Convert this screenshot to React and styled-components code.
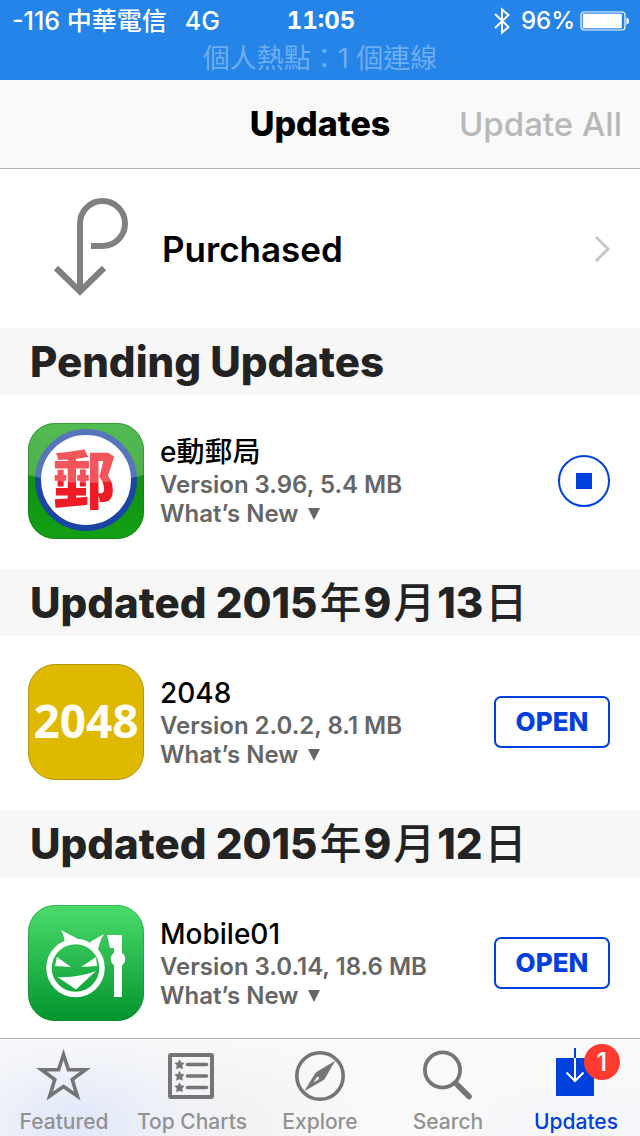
import React from "react";
import styled, { createGlobalStyle } from "styled-components";

const GlobalStyle = createGlobalStyle`
  * { box-sizing: border-box; }
  body {
    margin: 0;
    background: #fff;
    font-family: Inter, "Noto Sans CJK TC", sans-serif;
  }
  button { font-family: inherit; padding: 0; background: none; border: 0; cursor: pointer; }
  h1, h2, h3, p { margin: 0; }
`;

const Screen = styled.div`
  display: flex;
  flex-direction: column;
  height: 100vh;
  background: #fff;
`;

const StatusBar = styled.div`
  flex: none;
  height: 80px;
  background: #2484e8;
  color: #fff;
`;

const StatusRow = styled.div`
  display: grid;
  grid-template-columns: 1fr auto 1fr;
  align-items: center;
  height: 42px;
  padding: 0 10px 0 12px;
  font-size: 24px;
  line-height: 42px;
  font-weight: 500;
`;

const Carrier = styled.div`
  display: flex;
  gap: 18px;
  font-size: 25px;
`;

const Clock = styled.time`
  font-weight: 700;
  font-variant-numeric: tabular-nums;
`;

const StatusIcons = styled.div`
  display: flex;
  align-items: center;
  justify-content: flex-end;
`;

const BatteryLevel = styled.span`
  margin: 0 5px 0 11px;
`;

const Hotspot = styled.p`
  font-size: 27px;
  line-height: 34px;
  text-align: center;
  color: #6dadf0;
`;

const NavBar = styled.header`
  flex: none;
  display: grid;
  grid-template-columns: 1fr auto 1fr;
  align-items: center;
  height: 89px;
  padding: 0 18px;
  background: #f9f9f9;
  border-bottom: 1px solid #b2b2b2;
`;

const NavTitle = styled.h1`
  grid-column: 2;
  font-size: 34px;
  line-height: 44px;
  font-weight: 800;
  color: #000;
`;

const UpdateAll = styled.button`
  justify-self: end;
  font-size: 33px;
  line-height: 44px;
  font-weight: 500;
  color: #b8b8b8;
`;

const Content = styled.main`
  flex: 1;
  min-height: 0;
  overflow-y: auto;
  scrollbar-width: none;
`;

const PurchasedRow = styled.a`
  display: flex;
  align-items: center;
  height: 159px;
  padding: 0 28px;
  color: #000;
  text-decoration: none;
`;

const PurchasedLabel = styled.span`
  flex: 1;
  padding-left: 18px;
  font-size: 35px;
  line-height: 44px;
  font-weight: 600;
`;

const SectionTitle = styled.h2`
  height: 67px;
  padding: 0 30px;
  background: #f7f7f7;
  color: #232323;
  font-size: 42px;
  line-height: 67px;
  font-weight: 800;
  white-space: nowrap;
`;

const DateUnit = styled.span`
  margin: 0 2px;
  font-weight: 500;
`;

const AppRow = styled.article`
  display: flex;
  align-items: center;
  gap: 16px;
  height: 174px;
  padding: 0 30px 2px 28px;
`;

const AppInfo = styled.div`
  flex: 1;
  color: #666;
  font-size: 24px;
  line-height: 29px;
  font-weight: 600;
`;

const AppName = styled.h3`
  color: #000;
  font-size: 28px;
  line-height: 36px;
  font-weight: 500;
`;

const WhatsNew = styled.button`
  display: flex;
  align-items: center;
  gap: 10px;
  color: inherit;
  font-size: 24px;
  line-height: 29px;
  font-weight: 600;
`;

const OpenButton = styled.button`
  width: 116px;
  height: 52px;
  border: 2px solid #0040dd;
  border-radius: 7px;
  color: #0040dd;
  font-size: 26px;
  line-height: 48px;
  font-weight: 800;
`;

const StopButton = styled.button`
  display: grid;
  place-items: center;
  width: 52px;
  height: 52px;
  border: 2px solid #0040dd;
  border-radius: 50%;
`;

const StopMark = styled.span`
  width: 16px;
  height: 16px;
  background: #0040dd;
`;

const TabBar = styled.nav`
  flex: none;
  display: grid;
  grid-template-columns: repeat(5, 1fr);
  height: 98px;
  border-top: 1px solid #b0b0b2;
  background:
    radial-gradient(ellipse 180px 110px at 75px 85px, #dfe7f9, rgba(240, 243, 250, 0.6) 65%, transparent),
    radial-gradient(ellipse 160px 90px at 210px 85px, #f0f0f0, transparent),
    radial-gradient(ellipse 140px 70px at 580px 97px, #f3f5fa, transparent),
    #f9f9f9;
`;

const Tab = styled.button`
  display: flex;
  flex-direction: column;
  align-items: center;
  padding-top: 9px;
  color: ${(p) => (p.$active ? "#0040dd" : "#929292")};
  font-size: 21px;
  line-height: 36px;
  font-weight: 500;
  white-space: nowrap;
`;

const TabIcon = styled.span`
  position: relative;
  display: block;
  width: 56px;
  height: 56px;
  color: #757575;

  svg { display: block; }
`;

const Badge = styled.span`
  position: absolute;
  top: -4px;
  left: 36px;
  width: 36px;
  height: 36px;
  border-radius: 50%;
  background: #ff3b30;
  color: #fff;
  font-size: 26px;
  line-height: 36px;
  text-align: center;
`;

const Bluetooth = () => (
  <svg width="16" height="28" viewBox="0 0 16 28" fill="none" stroke="#fff" strokeWidth="2">
    <path d="M1 7 L14.500 20 L8 25.500 V2.500 L14.500 8 L1 21" />
  </svg>
);

const Battery = () => (
  <svg width="50" height="20" viewBox="0 0 50 20">
    <rect x="1" y="1" width="44" height="18" rx="3" fill="none" stroke="#fff" strokeWidth="1.200" />
    <rect x="2.800" y="2.800" width="39" height="14.400" rx="0.500" fill="#fff" />
    <path d="M46.500 6.500 Q49 7 49 10 Q49 13 46.500 13.500 Z" fill="#fff" />
  </svg>
);

const PurchasedIcon = () => (
  <svg width="116" height="116" viewBox="28 191 116 116" fill="none" stroke="#808080" strokeWidth="6">
    <path d="M91 246 H102.500 A22.500 22.500 0 1 0 80 223.500 V291" />
    <path d="M56 268 L80 291.500 L104 268" />
  </svg>
);

const Chevron = () => (
  <svg width="18" height="28" viewBox="0 0 18 28" fill="none" stroke="#c7c7cc" strokeWidth="3">
    <path d="M2 2 L14 14 L2 26" />
  </svg>
);

const Triangle = () => (
  <svg width="12" height="12" viewBox="0 0 12 12">
    <path d="M0 0 H12 L6 12 Z" fill="#666" />
  </svg>
);

const PostIcon = () => (
  <svg width="116" height="116" viewBox="0 0 116 116">
    <defs>
      <linearGradient id="postGreen" x2="0" y2="1">
        <stop offset="0" stopColor="#16a416" />
        <stop offset="0.5" stopColor="#12920f" />
        <stop offset="1" stopColor="#12a016" />
      </linearGradient>
      <linearGradient id="postRed" x2="0" y2="1">
        <stop offset="0.5" stopColor="#ee1a24" />
        <stop offset="1" stopColor="#ee1a24" />
      </linearGradient>
      <clipPath id="postShape">
        <rect width="116" height="116" rx="27" />
      </clipPath>
    </defs>
    <g clipPath="url(#postShape)">
      <rect width="116" height="116" fill="url(#postGreen)" />
      <circle cx="58" cy="57" r="48" fill="#fff" stroke="#1b45a4" strokeWidth="6" />
      <text
        x="56"
        y="80"
        textAnchor="middle"
        fontFamily='"Noto Sans CJK TC", sans-serif'
        fontSize="63"
        fontWeight="900"
        fill="#ee1a24"
      >
        郵
      </text>
      <path d="M0 0 H116 V52 Q58 68 0 52 Z" fill="#fff" fillOpacity="0.26" />
    </g>
    <path
      d="M27 0.500 H89 A26.500 26.500 0 0 1 115.500 27 V89 A26.500 26.500 0 0 1 89 115.500 H27 A26.500 26.500 0 0 1 0.500 89 V27 A26.500 26.500 0 0 1 27 0.500 Z"
      fill="none"
      stroke="#0a6a10"
      strokeOpacity="0.4"
    />
  </svg>
);

const TilesIcon = () => (
  <svg width="116" height="116" viewBox="0 0 116 116">
    <rect x="0.500" y="0.500" width="115" height="115" rx="26.500" fill="#dfb900" stroke="#b19512" />
    <text
      x="58"
      y="74"
      textAnchor="middle"
      fontFamily='"Open Sans", sans-serif'
      fontSize="46"
      fontWeight="700"
      fill="#fffdf5"
    >
      2048
    </text>
  </svg>
);

const MobileIcon = () => (
  <svg width="116" height="116" viewBox="0 0 116 116">
    <defs>
      <linearGradient id="mobileGreen" x2="0" y2="1">
        <stop offset="0" stopColor="#4bdb6c" />
        <stop offset="1" stopColor="#03942e" />
      </linearGradient>
    </defs>
    <rect width="116" height="116" rx="27" fill="url(#mobileGreen)" />
    <rect x="0.500" y="0.500" width="115" height="115" rx="26.500" fill="none" stroke="#0a7a2c" strokeOpacity="0.35" />
    <g fill="#fff">
      <circle cx="47.500" cy="63" r="26.500" fill="none" stroke="#fff" strokeWidth="5.500" />
      <path d="M33 25 L50 34 L50 38 L36 41 Q38 34 33 25 Z" />
      <path d="M76 29 L62 37 L70 46 Q71 37 76 29 Z" />
      <path d="M29 52 L43 62 L27 61 Z" />
      <path d="M68 52 L69 61 L53 62 Z" />
      <path d="M29.500 72 Q50 73 68 66 L48 84.500 Z" />
      <path d="M79 30 H94 V48 H86 V43 H82 Z" />
      <circle cx="90" cy="54" r="7.300" />
      <rect x="86" y="54" width="8" height="38" />
    </g>
  </svg>
);

const StarIcon = () => (
  <svg width="56" height="56" viewBox="0 0 56 56" fill="none" stroke="currentColor" strokeWidth="3.600">
    <path d="M27.500 6.500 L32.400 21.700 H49.500 L36.200 31.500 L41.300 48 L27.500 38.500 L13.700 48 L18.800 31.500 L5.500 21.700 H22.600 Z" />
  </svg>
);

const SMALL_STAR = "M0 -4.800 L1.500 -1.700 L4.600 -1.500 L2.500 0.900 L3 4.200 L0 2.900 L-3 4.200 L-2.500 0.900 L-4.600 -1.500 L-1.500 -1.700 Z";

const ChartsIcon = () => (
  <svg width="56" height="56" viewBox="0 0 56 56" fill="none" stroke="currentColor">
    <rect x="6" y="7" width="42" height="42" rx="1" strokeWidth="4" />
    {[16.5, 28, 39.5].map((y) => (
      <g key={y} transform={`translate(15.500 ${y})`}>
        <path d={SMALL_STAR} fill="currentColor" strokeWidth="0.600" />
        <path d="M8 0 H27" strokeWidth="3.600" strokeLinecap="round" />
      </g>
    ))}
  </svg>
);

const CompassIcon = () => (
  <svg width="56" height="56" viewBox="0 0 56 56" fill="none" stroke="currentColor">
    <circle cx="28" cy="28" r="23.200" strokeWidth="3.600" />
    <path d="M42.500 13.500 L32 31.500 L13 42.500 L24 24.500 Z" fill="currentColor" strokeWidth="0.600" />
    <path d="M21.500 34.500 L24.500 29.500 Q28 27.500 26.500 31.500 Z" fill="#f9f9f9" stroke="none" />
  </svg>
);

const SearchIcon = () => (
  <svg width="56" height="56" viewBox="0 0 56 56" fill="none" stroke="currentColor" strokeLinecap="round">
    <circle cx="22.500" cy="22" r="17.600" strokeWidth="3.800" />
    <path d="M35 35 L37 37" strokeWidth="4" />
    <path d="M37.500 37 L49 48.500" strokeWidth="5.600" />
  </svg>
);

const UpdatesIcon = () => (
  <svg width="56" height="56" viewBox="0 0 56 56" fill="none">
    <rect x="8" y="10" width="38" height="38" fill="#0040dd" />
    <path d="M27 0 V10" stroke="#0040dd" strokeWidth="2" />
    <path d="M27 10 V33 M18.500 24.500 L27 33 L35.500 24.500" stroke="#fff" strokeWidth="2" />
  </svg>
);

const UpdatedOn = ({ year, month, day }) => (
  <>
    Updated {year}
    <DateUnit>年</DateUnit>
    {month}
    <DateUnit>月</DateUnit>
    {day}
    <DateUnit>日</DateUnit>
  </>
);

const SECTIONS = [
  { name: "e動郵局", version: "Version 3.96, 5.4 MB", Icon: PostIcon },
  { updated: { year: 2015, month: 9, day: 13 }, name: "2048", version: "Version 2.0.2, 8.1 MB", Icon: TilesIcon },
  { updated: { year: 2015, month: 9, day: 12 }, name: "Mobile01", version: "Version 3.0.14, 18.6 MB", Icon: MobileIcon },
];

const TABS = [
  { label: "Featured", Icon: StarIcon },
  { label: "Top Charts", Icon: ChartsIcon },
  { label: "Explore", Icon: CompassIcon },
  { label: "Search", Icon: SearchIcon },
  { label: "Updates", Icon: UpdatesIcon, active: true, badge: 1 },
];

export default function App() {
  return (
    <Screen>
      <GlobalStyle />
      <StatusBar>
        <StatusRow>
          <Carrier>
            <span>-116 中華電信</span>
            <span>4G</span>
          </Carrier>
          <Clock>11:05</Clock>
          <StatusIcons>
            <Bluetooth />
            <BatteryLevel>96%</BatteryLevel>
            <Battery />
          </StatusIcons>
        </StatusRow>
        <Hotspot>個人熱點：1 個連線</Hotspot>
      </StatusBar>

      <NavBar>
        <NavTitle>Updates</NavTitle>
        <UpdateAll type="button">Update All</UpdateAll>
      </NavBar>

      <Content>
        <PurchasedRow href="#purchased">
          <PurchasedIcon />
          <PurchasedLabel>Purchased</PurchasedLabel>
          <Chevron />
        </PurchasedRow>
        {SECTIONS.map(({ updated, name, version, Icon }) => (
          <section key={name}>
            <SectionTitle>{updated ? <UpdatedOn {...updated} /> : "Pending Updates"}</SectionTitle>
            <AppRow>
              <Icon />
              <AppInfo>
                <AppName>{name}</AppName>
                <p>{version}</p>
                <WhatsNew type="button">
                  What’s New <Triangle />
                </WhatsNew>
              </AppInfo>
              {updated ? (
                <OpenButton type="button">OPEN</OpenButton>
              ) : (
                <StopButton type="button" aria-label="Stop">
                  <StopMark />
                </StopButton>
              )}
            </AppRow>
          </section>
        ))}
      </Content>

      <TabBar>
        {TABS.map(({ label, Icon, active, badge }) => (
          <Tab key={label} type="button" $active={active}>
            <TabIcon>
              <Icon />
              {badge && <Badge>{badge}</Badge>}
            </TabIcon>
            {label}
          </Tab>
        ))}
      </TabBar>
    </Screen>
  );
}
